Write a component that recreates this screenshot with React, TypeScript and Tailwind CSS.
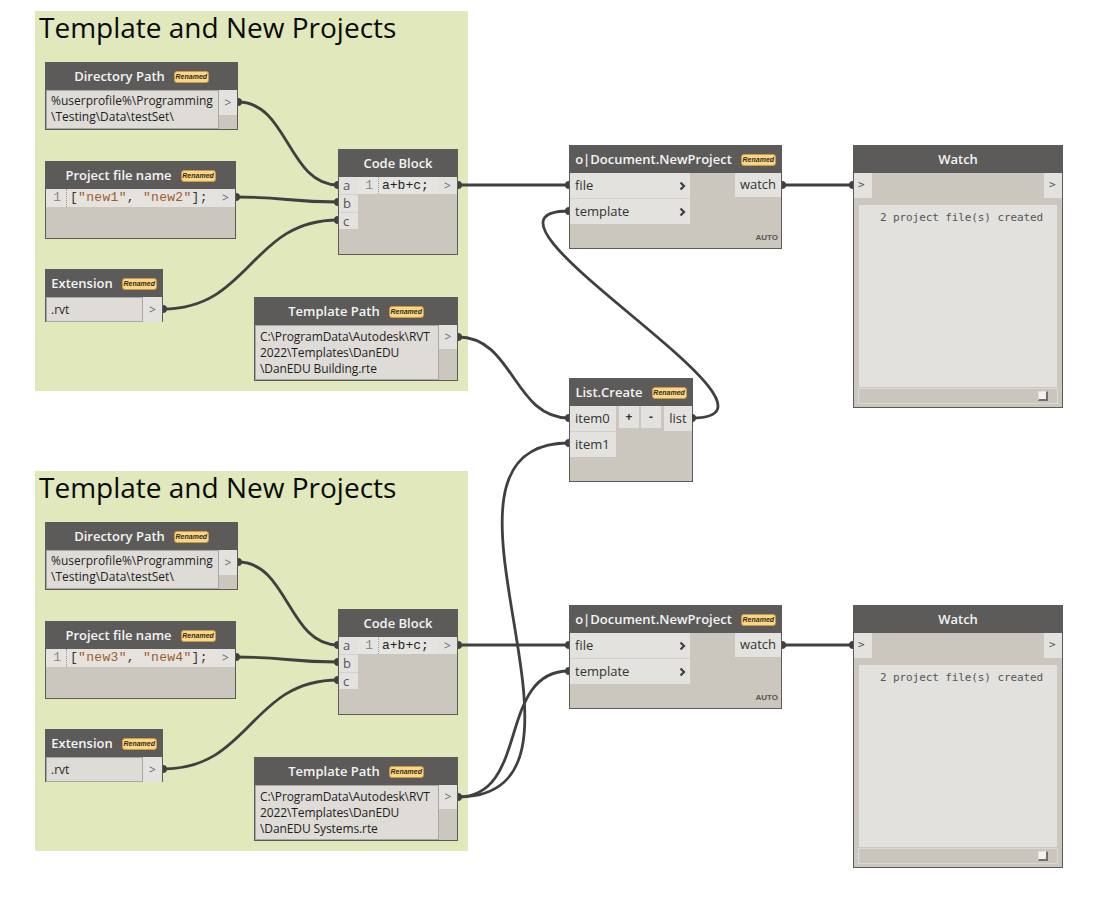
import React from "react";

const HDR = "bg-[#5d5b59]";

function Badge() {
  return (
    <span className="inline-flex items-center justify-center h-[12px] w-[35px] rounded-[3px] bg-[#f8d68b] border border-[#c99a3e] text-[7px] font-bold italic text-[#3a2a10] leading-none font-['Liberation_Sans',sans-serif]">
      Renamed
    </span>
  );
}

function Header({ title, badge = true }: { title: string; badge?: boolean }) {
  return (
    <div className={`h-[27px] shrink-0 ${HDR} flex items-center justify-center gap-[9px] text-[#f4f4f4] text-[13px] font-semibold`}>
      <span>{title}</span>
      {badge && <Badge />}
    </div>
  );
}

function Port({ h = "h-[25px]" }: { h?: string }) {
  return (
    <div className={`${h} bg-[#e4e2de] flex items-center justify-center text-[#6a6a6a] text-[12px]`}>&gt;</div>
  );
}

function Chevron() {
  return (
    <svg width="7" height="10" viewBox="0 0 7 10">
      <polyline points="1.5,1.5 5,5 1.5,8.5" fill="none" stroke="#3f3f3f" strokeWidth="2.2" />
    </svg>
  );
}

const NODE = "absolute border border-[#5d5b59] bg-[#cbc7bf] flex flex-col font-['Open_Sans',sans-serif]";
const MONO = "font-['Liberation_Mono',monospace]";

function Section({ n1, n2, tpl }: { n1: string; n2: string; tpl: string }) {
  return (
    <>
      <div className="absolute left-[35px] top-[11px] w-[433px] h-[380px] bg-[#e0e8bc]">
        <div className="pl-[4px] text-[28px] leading-[32px] text-[#0a0a0a] font-['Open_Sans',sans-serif]">Template and New Projects</div>
      </div>

      {/* Directory Path */}
      <div className={`${NODE} left-[45px] top-[62px] w-[193px] h-[68px]`}>
        <Header title="Directory Path" />
        <div className="flex flex-1">
          <div className="w-[173px] border border-[#a9a7a3] bg-[#dfdcd7] pl-[4px] pt-[2px] text-[12px] leading-[16px] text-[#1e1e1e]">
            %userprofile%\Programming<br />\Testing\Data\testSet\
          </div>
          <div className="flex-1 flex flex-col">
            <Port />
          </div>
        </div>
      </div>

      {/* Project file name */}
      <div className={`${NODE} left-[45px] top-[161px] w-[191px] h-[78px]`}>
        <Header title="Project file name" />
        <div className="flex h-[18px]">
          <div className="w-[170px] bg-[#e6e3df] flex items-center">
            <div className={`w-[21px] h-full pr-[5px] text-right text-[#8a8a8a] text-[13px] leading-[18px] border-r border-dotted border-[#9a9a9a] ${MONO}`}>1</div>
            <div className={`pl-[3px] text-[13px] leading-[18px] text-[#333] ${MONO} tracking-[0.3px]`}>
              [<span className="text-[#9b5b2a]">"{n1}"</span>, <span className="text-[#9b5b2a]">"{n2}"</span>];
            </div>
          </div>
          <div className="flex-1">
            <Port h="h-[18px]" />
          </div>
        </div>
      </div>

      {/* Extension */}
      <div className={`${NODE} left-[45px] top-[269px] w-[118px] h-[53px]`}>
        <Header title="Extension" />
        <div className="flex flex-1">
          <div className="w-[97px] border border-[#a9a7a3] bg-[#dfdcd7] pl-[4px] text-[12px] leading-[23px] text-[#1e1e1e]">.rvt</div>
          <div className="flex-1 flex flex-col">
            <Port h="h-full" />
          </div>
        </div>
      </div>

      {/* Template Path */}
      <div className={`${NODE} left-[254px] top-[297px] w-[204px] h-[84px]`}>
        <Header title="Template Path" />
        <div className="flex flex-1">
          <div className="w-[184px] border border-[#a9a7a3] bg-[#dfdcd7] pl-[4px] pt-[3px] text-[12px] leading-[16px] text-[#1e1e1e] tracking-[-0.1px] whitespace-pre-line">
            {tpl}
          </div>
          <div className="flex-1 flex flex-col">
            <Port h="h-[24px]" />
          </div>
        </div>
      </div>

      {/* Code Block */}
      <div className={`${NODE} left-[338px] top-[149px] w-[120px] h-[106px]`}>
        <Header title="Code Block" badge={false} />
        <div className="flex flex-1">
          <div className="w-[19px] flex flex-col">
            <div className="h-[17px] bg-[#e4e2de] pl-[4px] text-[13px] leading-[17px] text-[#555]">a</div>
            <div className="h-[18px] bg-[#e4e2de] border-t border-[#d4d1cc] pl-[4px] text-[13px] leading-[17px] text-[#555]">b</div>
            <div className="h-[17px] bg-[#e4e2de] border-t border-[#d4d1cc] pl-[4px] text-[13px] leading-[16px] text-[#555]">c</div>
          </div>
          <div className="w-[80px] h-[17px] bg-[#e6e4e0] flex items-center">
            <div className={`w-[21px] h-full pr-[5px] text-right text-[#8a8a8a] text-[13px] leading-[17px] border-r border-dotted border-[#9a9a9a] ${MONO}`}>1</div>
            <div className={`pl-[3px] text-[13px] leading-[17px] text-[#222] ${MONO}`}>a+b+c;</div>
          </div>
          <div className="flex-1">
            <Port h="h-[17px]" />
          </div>
        </div>
      </div>

      {/* Document.NewProject */}
      <div className={`${NODE} left-[569px] top-[145px] w-[213px] h-[104px]`}>
        <Header title="o|Document.NewProject" />
        <div className="flex flex-1 relative">
          <div className="w-[120px] flex flex-col">
            <div className="h-[25px] bg-[#e4e2de] flex items-center justify-between pl-[5px] pr-[4px] text-[13px] text-[#333]">
              <span>file</span>
              <Chevron />
            </div>
            <div className="h-[1px] bg-[#d2cec8]" />
            <div className="h-[25px] bg-[#e4e2de] flex items-center justify-between pl-[5px] pr-[4px] text-[13px] text-[#333]">
              <span>template</span>
              <Chevron />
            </div>
          </div>
          <div className="flex-1" />
          <div className="w-[46px] h-[24px] bg-[#e4e2de] flex items-center justify-center text-[13px] text-[#333]">watch</div>
          <span className="absolute right-[3px] bottom-[4px] text-[8px] font-bold text-[#555] font-['Liberation_Sans',sans-serif]">AUTO</span>
        </div>
      </div>

      {/* Watch */}
      <div className={`${NODE} left-[853px] top-[145px] w-[210px] h-[263px]`}>
        <Header title="Watch" badge={false} />
        <div className="h-[32px] flex justify-between items-start">
          <div className="w-[18px] h-[25px] bg-[#e4e2de] flex items-center pl-[4px] text-[#555] text-[11px] font-['DejaVu_Sans_Mono',monospace]">&gt;</div>
          <div className="w-[18px] h-[25px] bg-[#e4e2de] flex items-center pl-[5px] text-[#555] text-[11px] font-['DejaVu_Sans_Mono',monospace]">&gt;</div>
        </div>
        <div className="mx-[5px] h-[182px] bg-[#e3e1dd] pt-[6px] pl-[21px] text-[11px] leading-[14px] text-[#555] font-['DejaVu_Sans_Mono',monospace] tracking-[-0.1px]">
          2 project file(s) created
        </div>
        <div className="mx-[4px] mt-[1px] h-[16px] border border-[#dcd9d4] bg-[#cac5bd] flex items-center justify-end pr-[9px]">
          <div className="w-[10px] h-[10px] bg-[#f3f2f0] border-r-2 border-b-2 border-[#6f6f6f] border-t border-l border-t-[#e0e0e0] border-l-[#e0e0e0]" />
        </div>
      </div>
    </>
  );
}

function bez(x1: number, y1: number, x2: number, y2: number, d?: number) {
  const k = d ?? Math.max(Math.abs(x2 - x1) / 2, 20);
  return `M${x1},${y1} C${x1 + k},${y1} ${x2 - k},${y2} ${x2},${y2}`;
}

const wires: [number, number, number, number, number?][] = [
  [238, 102, 338, 185],
  [236, 197, 338, 202],
  [163, 309, 338, 220],
  [458, 185, 569, 185],
  [782, 185, 853, 185],
  [458, 337, 569, 418],
  [692, 418, 569, 211, 125],
  [238, 562, 338, 645],
  [236, 657, 338, 662],
  [163, 769, 338, 680],
  [458, 645, 569, 645],
  [782, 645, 853, 645],
  [458, 797, 569, 443, 170],
  [458, 797, 569, 671, 72],
];

function Wires() {
  const outs = new Set<string>();
  const ins = new Set<string>();
  wires.forEach(([a, b, c, d]) => {
    outs.add(`${a},${b}`);
    ins.add(`${c},${d}`);
  });
  return (
    <svg className="absolute left-0 top-0 pointer-events-none" width="1098" height="908">
      {wires.map(([a, b, c, d, k], i) => (
        <path key={i} d={bez(a, b, c, d, k)} fill="none" stroke="#404040" strokeWidth="2.8" />
      ))}
      {[...outs].map((s) => {
        const [x, y] = s.split(",").map(Number);
        return <path key={"o" + s} d={`M${x},${y - 4} A4,4 0 0 1 ${x},${y + 4} Z`} fill="#404040" />;
      })}
      {[...ins].map((s) => {
        const [x, y] = s.split(",").map(Number);
        return <path key={"i" + s} d={`M${x},${y - 4} A4,4 0 0 0 ${x},${y + 4} Z`} fill="#404040" />;
      })}
    </svg>
  );
}

export default function App() {
  return (
    <div className="relative w-[1098px] h-[908px] bg-white overflow-hidden">
      <div className="absolute left-0 top-0 w-[1098px] h-[448px]">
        <Section n1="new1" n2="new2" tpl={"C:\\ProgramData\\Autodesk\\RVT\n2022\\Templates\\DanEDU\n\\DanEDU Building.rte"} />
      </div>
      <div className="absolute left-0 top-[460px] w-[1098px] h-[448px]">
        <Section n1="new3" n2="new4" tpl={"C:\\ProgramData\\Autodesk\\RVT\n2022\\Templates\\DanEDU\n\\DanEDU Systems.rte"} />
      </div>

      {/* List.Create */}
      <div className={`${NODE} left-[569px] top-[378px] w-[124px] h-[104px]`}>
        <Header title="List.Create" />
        <div className="flex flex-1">
          <div className="w-[46px] flex flex-col">
            <div className="h-[25px] bg-[#e4e2de] flex items-center pl-[5px] text-[13px] text-[#333]">item0</div>
            <div className="h-[1px] bg-[#d2cec8]" />
            <div className="h-[25px] bg-[#e4e2de] flex items-center pl-[5px] text-[13px] text-[#333]">item1</div>
          </div>
          <div className="ml-[3px] w-[20px] h-[22px] bg-[#e4e2de] flex items-center justify-center text-[12px] font-bold text-[#333]">+</div>
          <div className="ml-[2px] w-[20px] h-[22px] bg-[#e4e2de] flex items-center justify-center text-[12px] font-bold text-[#333]">-</div>
          <div className="flex-1" />
          <div className="w-[28px] h-[25px] bg-[#e4e2de] flex items-center justify-center text-[13px] text-[#333]">list</div>
        </div>
      </div>

      <Wires />
    </div>
  );
}
